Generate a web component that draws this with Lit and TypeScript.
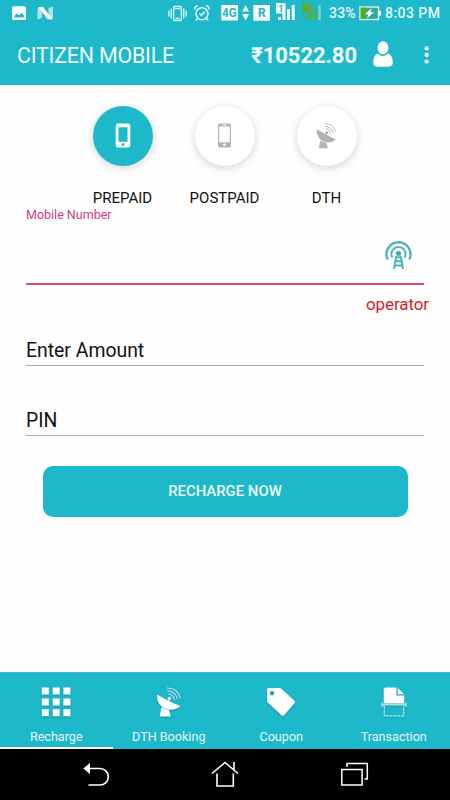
import { LitElement, html, css, svg } from "lit";
import { customElement, state } from "lit/decorators.js";
import { classMap } from "lit/directives/class-map.js";

const dish = (w: number) => svg`
  <path d="M1 7.5 C7 11 15 15.5 24.5 19.3 C20.5 23 15 24 10 22.3 C4.5 20.5 .5 15 1 7.5 Z" fill="currentColor"/>
  <path d="M5.5 20.5 Q9 23.5 13 23.5 L14.8 30 H3.5 Z" fill="currentColor"/>
  <circle cx="13.3" cy="11.6" r="1.7" fill="currentColor"/>
  <path d="M12.5 16 L13.3 12 M12.3 6.8 Q17 7.5 18.8 12.8 M11.3 3.8 Q19 4 21.6 12 M11 1 Q21.5 .8 24.5 11" fill="none" stroke="currentColor" stroke-opacity=".8" stroke-width=${w}/>`;

@customElement("status-bar")
export class StatusBar extends LitElement {
  static styles = css`
    :host { display: flex; align-items: center; height: 27px; padding: 0 9px 0 12px; color: #e9fbfd; font-size: 14px; font-weight: 500; }
    svg { display: block; flex: none; }
    .space { flex: 1; }
    .percent { width: 30px; margin-left: 7px; letter-spacing: .2px; }
    .time { width: 56px; margin-left: 4px; letter-spacing: .45px; white-space: nowrap; }
    text { font-family: Roboto, sans-serif; font-weight: 700; }
    .percent, .time { position: relative; top: -.5px; }
  `;
  render() {
    return html`
      <svg width="42" height="27" viewBox="12 0 42 27">
        <rect x="12" y="6.3" width="14" height="13.8" rx="1.5" fill="#f4feff"/>
        <path d="M14.5 17.5 V15.8 L17 13.6 L19 15.2 L21.5 13 L23.8 15.2 V17.5 Z" fill="#1eb8cb"/>
        <path d="M37.5 8.5 L42 7 V18 L37.5 19.5 Z M48.5 8 L53 6.5 V18 L48.5 19.3 Z" fill="#a9e4eb"/>
        <path d="M38 7 H43 L52.8 19.3 H47.8 Z" fill="#fff"/>
      </svg>
      <span class="space"></span>
      <svg width="154" height="27" viewBox="169 0 154 27">
        <g fill="none" stroke="#e0f9fb" stroke-width="1.3">
          <rect x="174.7" y="6.5" width="7.6" height="14" rx=".8"/>
          <path d="M176 8.7 H181 M176.5 18.5 H180.5 M172.2 8.5 V18.5 M184.8 8.5 V18.5 M169.9 10.5 V16.5 M187.1 10.5 V16.5"/>
          <circle cx="203" cy="13.7" r="6" stroke-width="1.6"/>
          <path d="M196 9.5 Q195.5 6 199 5.8 M210 9.5 Q210.5 6 207 5.8 M198.8 18.3 L196.8 20.5 M207.2 18.3 L209.2 20.5 M200.3 13.5 L202.3 15.3 L205.8 11.6" stroke-width="1.6"/>
        </g>
        <rect x="222.3" y="5" width="16.7" height="15.5" fill="#effdfe"/>
        <text x="223.1" y="17.3" font-size="12" textLength="14.6" lengthAdjust="spacingAndGlyphs" fill="#38aebc">4G</text>
        <path d="M243.3 11.5 L246.6 5 L250 11.5 Z M243.3 14 L246.6 20.5 L250 14 Z" fill="#effdfe"/>
        <rect x="254.3" y="5" width="16.7" height="15.8" fill="#effdfe"/>
        <text x="258.9" y="17.1" font-size="12" fill="#38aebc">R</text>
        <g fill="#effdfe">
          <rect x="277" y="3" width="9.5" height="10.5"/>
          <rect x="279" y="17" width="3" height="3"/>
          <rect x="283.5" y="13" width="3" height="7"/>
          <rect x="288" y="9" width="3" height="11"/>
          <rect x="292.7" y="5" width="3" height="15"/>
        </g>
        <text x="279.3" y="11.5" font-size="9" fill="#38aebc">1</text>
        <g fill="#55ad3a">
          <rect x="303.2" y="3" width="9" height="10.5"/>
          <rect x="305" y="17" width="3" height="3" opacity=".6"/>
          <rect x="309.3" y="13" width="3.4" height="7"/>
          <rect x="314.3" y="9" width="3.2" height="11"/>
        </g>
        <rect x="319.2" y="5" width="2.6" height="15" fill="#75d2dd"/>
      </svg>
      <span class="percent">33%</span>
      <svg width="22" height="27" viewBox="359 0 22 27">
        <rect x="360" y="7" width="18.5" height="12.5" fill="#2ba7a4" stroke="#dff7e0" stroke-width="1.4"/>
        <rect x="360.7" y="7.7" width="5.5" height="11.1" fill="#4daf17"/>
        <path d="M379 11 H381 V15.5 H379 Z M371.8 8 L364.8 14.3 H368.5 L366.8 18.5 L374 12.3 H370.2 Z" fill="#fff"/>
      </svg>
      <span class="time">8:03 PM</span>`;
  }
}

@customElement("app-root")
export class AppRoot extends LitElement {
  @state() private mode = "PREPAID";
  @state() private tab = "Recharge";

  static styles = css`
    :host { display: flex; flex-direction: column; width: 450px; height: 800px; overflow: hidden; background: #fefefe; font-family: Roboto, sans-serif; color: #111; }
    * { box-sizing: border-box; }
    svg { display: block; flex: none; }
    .top { background: #1eb8cb; height: 84.5px; flex: none; color: #f1fdfe; }
    .bar { display: flex; align-items: center; height: 57px; padding: 0 16px 0 17px; }
    .title { font-size: 21.4px; letter-spacing: -.2px; flex: 1; white-space: nowrap; }
    .balance { font-size: 22px; letter-spacing: -.05px; font-weight: 700; white-space: nowrap; }
    .user { margin: -3px 0 0 16px; }
    .more { margin: -2px 0 0 25px; }
    main { flex: 1; display: flex; flex-direction: column; padding: 0 26px; }
    .modes { display: flex; justify-content: center; gap: 2px; margin: 21px 1px 0 0; height: 101.5px; }
    .mode { width: 100px; display: flex; flex-direction: column; align-items: center; font-size: 15px; line-height: 18px; }
    .disc { width: 60px; height: 60px; border-radius: 50%; display: grid; place-items: center; background: #fff; color: #b2b2b2; box-shadow: 0 2px 9px rgba(0,0,0,.17); margin-bottom: 23px; flex: none; }
    .disc.on { background: #1eb8cb; color: #fff; }
    .float { font-size: 12.5px; line-height: 16px; color: #d53b82; }
    .number { display: flex; justify-content: flex-end; width: 398px; height: 61.5px; padding: 16px 12px 0 0; border-bottom: 2px solid #d8457f; }
    .operator { align-self: flex-end; margin: 8px -5px 0 0; font-size: 17px; letter-spacing: -.1px; line-height: 22px; color: #d2232c; }
    .field { font-size: 19.4px; line-height: 24px; height: 27px; border-bottom: 1.5px solid #aaa; width: 398px; }
    .amount { margin-top: 24px; }
    .pin { margin-top: 43px; }
    .go { margin: 30px 16.5px 0; height: 51.5px; border-radius: 10px; display: grid; place-items: center; background: #1eb8cb; color: #edfdfe; font-size: 14.9px; font-weight: 500; }
    .tabs { height: 77px; flex: none; display: grid; grid-template-columns: repeat(4, 1fr); background: #1eb8cb; border-top: 1px solid #45bfcf; color: #e4f9fb; }
    .tab { display: flex; flex-direction: column; align-items: center; padding-top: 14px; font-size: 12.6px; line-height: 16px; gap: 12px; border-bottom: 2.5px solid transparent; white-space: nowrap; }
    .tab svg { color: #fff; filter: drop-shadow(0 1px 1px rgba(0,70,80,.3)); }
    .tab.on { border-color: #fff; }
    .nav { height: 51px; flex: none; background: #000; display: flex; align-items: center; padding: 0 81px 0 82px; justify-content: space-between; }
  `;

  private modeIcon(name: string) {
    if (name === "PREPAID") return html`<svg width="16" height="25" viewBox="0 0 16 25"><path fill="currentColor" fill-rule="evenodd" d="M3 .5 H13 Q15.3 .5 15.3 3 V22 Q15.3 24.5 13 24.5 H3 Q.7 24.5 .7 22 V3 Q.7 .5 3 .5 Z M3.5 4.2 V18.7 H12.5 V4.2 Z M8 20 A1.5 1.5 0 1 0 8 23 A1.5 1.5 0 1 0 8 20 Z"/></svg>`;
    if (name === "POSTPAID") return html`<svg width="15" height="25" viewBox="0 0 15 25"><path fill="currentColor" fill-rule="evenodd" d="M2.5 .5 H12.5 Q14 .5 14 2 V23 Q14 24.5 12.5 24.5 H2.5 Q1 24.5 1 23 V2 Q1 .5 2.5 .5 Z M2.2 3.6 V19.2 H12.8 V3.6 Z M5.5 1.5 V2.4 H9.5 V1.5 Z M7.5 20.4 A1.4 1.4 0 1 0 7.5 23.2 A1.4 1.4 0 1 0 7.5 20.4 Z"/></svg>`;
    return html`<svg width="21" height="26" viewBox="0 0 26 31" preserveAspectRatio="none">${dish(1.2)}</svg>`;
  }

  private tabIcon(name: string) {
    switch (name) {
      case "Recharge":
        return html`<svg width="30" height="30" viewBox="0 0 30 30" fill="currentColor">${[0.5, 11.5, 22.2].map((y) => [0.8, 11.7, 22.4].map((x) => svg`<rect x=${x} y=${y} width="7" height="7"/>`))}</svg>`;
      case "DTH Booking":
        return html`<svg width="25" height="30" viewBox="0 0 25 30.5">${dish(1.1)}</svg>`;
      case "Coupon":
        return html`<svg width="30" height="30" viewBox="0 0 30 30"><path fill="currentColor" fill-rule="evenodd" d="M3 1 H13 Q14.3 1 15.3 1.8 L28.3 13.6 Q29.7 15 28.3 16.4 L18.3 28 Q17 29.4 15.6 28.2 L2 15.8 Q1 14.8 1 13.5 V3 Q1 1 3 1 Z M6 4 A2.2 2.2 0 1 0 6 8.4 A2.2 2.2 0 1 0 6 4 Z"/></svg>`;
      default:
        return html`<svg width="26" height="30" viewBox="0 0 26 30"><path fill="currentColor" d="M4.5 .5 H15.5 V8.5 H23.3 V16.5 H2.7 V2.3 Q2.7 .5 4.5 .5 Z M16.8 1 L23 7.2 H16.8 Z"/><path fill="none" stroke="#a9e2e9" stroke-width="1.6" d="M1 15.8 V19.8 M25 15.8 V19.8 M.5 17.6 H25.5"/><path fill="none" stroke="#b5e9ef" stroke-width="1.3" stroke-dasharray="3 .8" d="M3.3 19 V28.8 H22.7 V19"/></svg>`;
    }
  }

  render() {
    return html`
      <header class="top">
        <status-bar></status-bar>
        <div class="bar">
          <span class="title">CITIZEN MOBILE</span>
          <span class="balance">₹10522.80</span>
          <svg class="user" width="20" height="26" viewBox="0 0 20 26" fill="#fff"><ellipse cx="10" cy="6.8" rx="5.5" ry="6.5"/><path d="M4.8 12.5 Q10 17.5 15.2 12.5 Q19.8 14.5 19.8 21.5 Q19.8 25.8 15 25.8 H5 Q.2 25.8 .2 21.5 Q.2 14.5 4.8 12.5 Z"/></svg>
          <svg class="more" width="16" height="18" viewBox="0 0 16 18" fill="#fff"><circle cx="8.7" cy="2.3" r="2.1"/><circle cx="8.7" cy="8.9" r="2.1"/><circle cx="8.7" cy="15.5" r="2.1"/></svg>
        </div>
      </header>
      <main>
        <div class="modes">
          ${["PREPAID", "POSTPAID", "DTH"].map((m) => html`<div class="mode" @click=${() => (this.mode = m)}><span class=${classMap({ disc: true, on: this.mode === m })}>${this.modeIcon(m)}</span>${m}</div>`)}
        </div>
        <div class="float">Mobile Number</div>
        <div class="number">
          <svg width="27" height="31" viewBox="0 0 27 31" fill="none" stroke="#4fb3bf">
            <path d="M2.7 20.5 A12 12 0 1 1 24.3 20.5" stroke-width="2.4"/>
            <path d="M7.5 18.5 A7 7 0 1 1 19.5 18.5" stroke-width="2"/>
            <circle cx="13.5" cy="14.5" r="2.5" fill="#35a5b2" stroke="none"/>
            <path d="M11.3 17 L9 30 M15.7 17 L18 30 M11.2 18.3 H15.8 M10.8 22.3 H16.2 M10 26.5 H17" stroke-width="2"/>
          </svg>
        </div>
        <div class="operator">operator</div>
        <div class="field amount">Enter Amount</div>
        <div class="field pin">PIN</div>
        <div class="go">RECHARGE NOW</div>
      </main>
      <nav class="tabs">
        ${["Recharge", "DTH Booking", "Coupon", "Transaction"].map((t) => html`<div class=${classMap({ tab: true, on: this.tab === t })} @click=${() => (this.tab = t)}>${this.tabIcon(t)}<span>${t}</span></div>`)}
      </nav>
      <footer class="nav">
        <svg width="27" height="26" viewBox="82 762 27 26"><path d="M83.3 768.5 L90 763 V774 Z" fill="#fff"/><path d="M89 768.5 H100 A8 8 0 0 1 100 785 H88.5" fill="none" stroke="#fff" stroke-width="1.6"/></svg>
        <svg width="28" height="27" viewBox="211 761 28 27" fill="none" stroke="#fff" stroke-width="1.6"><path d="M212 773.5 L225 762.5 L238 773.5 M217 773.5 V786 H233.3 V773.5 M234 762 V769.5"/></svg>
        <svg width="28" height="25" viewBox="341 762 28 25" fill="none" stroke="#fff" stroke-width="1.5"><rect x="341.8" y="769.5" width="20.3" height="15.5"/><path d="M347 767 V763.5 H367.3 V779 H364.5"/></svg>
      </footer>`;
  }
}
